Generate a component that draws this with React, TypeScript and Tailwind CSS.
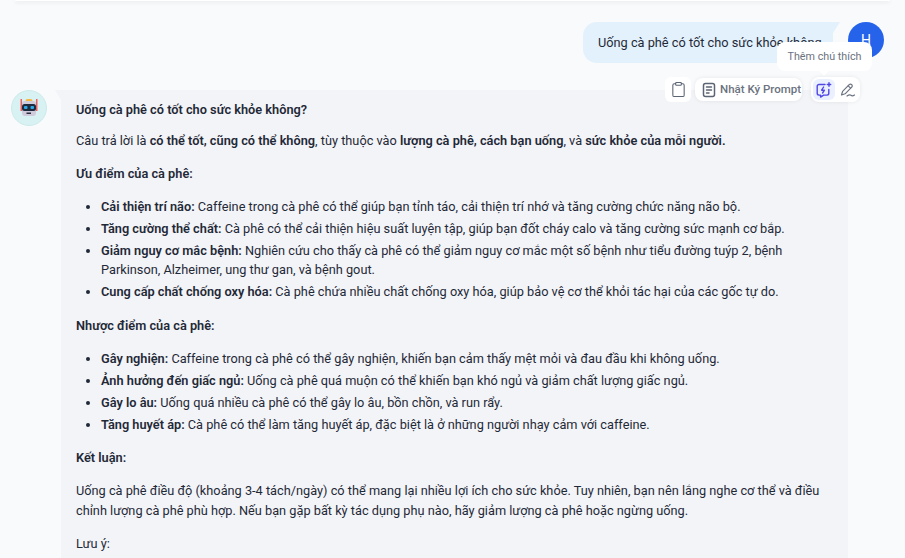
import { Clipboard } from 'lucide-react';

function BotAvatar() {
  return (
    <svg width="36" height="36" viewBox="0 0 36 36" className="shrink-0">
      <circle cx="18" cy="18" r="17.5" fill="#d8f1f2" stroke="#cdeaea" />
      <path d="M9.5 9h1.5l.5 12h-2zM25 9h1.5v12h-2z" fill="#e8605f" />
      <path d="M14.5 11q0-2 2-2h3q2 0 2 2z" fill="#f5b942" />
      <rect x="11" y="11" width="14" height="15" rx="3" fill="#cfcbdc" />
      <rect x="11" y="14" width="14" height="7" rx="2.5" fill="#1f2a3c" />
      <rect x="13" y="16" width="3.5" height="3" rx="1" fill="#2fa8e8" />
      <rect x="19.5" y="16" width="3.5" height="3" rx="1" fill="#2fa8e8" />
      <rect x="15.5" y="22.5" width="4.5" height="1.5" fill="#2b2f3d" />
    </svg>
  );
}

function PromptIcon() {
  return (
    <svg width="16" height="16" viewBox="0 0 16 16" fill="none" stroke="#5b6472" strokeWidth="1.5" strokeLinecap="round" strokeLinejoin="round">
      <rect x="2.5" y="1.5" width="11" height="13" rx="2" />
      <path d="M5.5 5h5M5.5 8h5M5.5 11h2.5" />
    </svg>
  );
}

function NoteIcon() {
  return (
    <svg width="16" height="16" viewBox="0 0 16 16" fill="none" stroke="#4f46e5" strokeWidth="1.4" strokeLinejoin="round" strokeLinecap="round">
      <path d="M9 2.5H3a1.8 1.8 0 0 0-1.8 1.8v7a1.8 1.8 0 0 0 1.8 1.8h1.6v2l3-2H11a1.8 1.8 0 0 0 1.8-1.8V7.5" />
      <path d="M7.6 5 5.6 8.2h2.8L6.6 11" />
      <path d="M13 .8v3.4M11.3 2.5h3.4" />
    </svg>
  );
}

function EditIcon() {
  return (
    <svg width="16" height="16" viewBox="0 0 16 16" fill="none" stroke="#6b7280" strokeWidth="1.2" strokeLinejoin="round" strokeLinecap="round">
      <path d="M1.5 13 2.6 9.3 9.2 2.7a1.7 1.7 0 0 1 2.5 2.5L5.1 11.8z" />
      <path d="M8.2 3.8 10.6 6.2" />
      <path d="M7 14c2-1.5 3-1.5 4-.7s2 .7 3.5-.3" />
    </svg>
  );
}

function Item({ title, children }: { title: string; children: string }) {
  return (
    <li className="mt-[2.5px] first:mt-0">
      <b className="font-semibold">{title}</b> {children}
    </li>
  );
}

export default function App() {
  return (
    <div className="h-[558px] w-[905px] overflow-hidden bg-[#f9fafc] font-['Roboto',sans-serif] text-[12.75px] leading-[19.5px] text-[#1f2937]">
      {/* Top bar edge */}
      <div className="mx-[15px] h-[1px] rounded-b-lg bg-white shadow-[0_1px_4px_rgba(0,0,0,0.18)]" />

      {/* User message */}
      <div className="mt-[21px] flex justify-end pr-[21px]">
        <div className="flex h-[41px] w-[250px] items-center whitespace-nowrap rounded-[14px] rounded-tr-none bg-[#e3f1fc] pl-[15px]">
          Uống cà phê có tốt cho sức khỏe không
        </div>
        <div className="h-[11px] w-[7px] bg-[#e3f1fc] [clip-path:polygon(0_0,100%_0,0_100%)]" />
        <div className="ml-2 flex h-9 w-9 items-center justify-center rounded-full bg-[#2563eb] text-sm text-white">H</div>
      </div>

      {/* Assistant message */}
      <div className="relative mt-[27px] flex pl-[11px]">
        <BotAvatar />
        <div className="ml-2 h-[10px] w-[6px] bg-[#f3f4f8] [clip-path:polygon(0_0,100%_0,100%_100%)]" />
        <div className="h-[480px] w-[787px] bg-[#f3f4f8] pb-[9px] pl-[15px] pr-[20px] pt-[10px]">
          <p className="font-semibold">Uống cà phê có tốt cho sức khỏe không?</p>
          <p className="mt-[11px]">
            Câu trả lời là <b className="font-semibold">có thể tốt, cũng có thể không</b>, tùy thuộc vào{' '}
            <b className="font-semibold">lượng cà phê, cách bạn uống</b>, và <b className="font-semibold">sức khỏe của mỗi người.</b>
          </p>
          <p className="mt-[13.5px] font-semibold">Ưu điểm của cà phê:</p>
          <ul className="mt-[13.5px] list-disc pl-[25px]">
            <Item title="Cải thiện trí não:">Caffeine trong cà phê có thể giúp bạn tỉnh táo, cải thiện trí nhớ và tăng cường chức năng não bộ.</Item>
            <Item title="Tăng cường thể chất:">Cà phê có thể cải thiện hiệu suất luyện tập, giúp bạn đốt cháy calo và tăng cường sức mạnh cơ bắp.</Item>
            <Item title="Giảm nguy cơ mắc bệnh:">Nghiên cứu cho thấy cà phê có thể giảm nguy cơ mắc một số bệnh như tiểu đường tuýp 2, bệnh Parkinson, Alzheimer, ung thư gan, và bệnh gout.</Item>
            <Item title="Cung cấp chất chống oxy hóa:">Cà phê chứa nhiều chất chống oxy hóa, giúp bảo vệ cơ thể khỏi tác hại của các gốc tự do.</Item>
          </ul>
          <p className="mt-[14.5px] font-semibold">Nhược điểm của cà phê:</p>
          <ul className="mt-[13.5px] list-disc pl-[25px]">
            <Item title="Gây nghiện:">Caffeine trong cà phê có thể gây nghiện, khiến bạn cảm thấy mệt mỏi và đau đầu khi không uống.</Item>
            <Item title="Ảnh hưởng đến giấc ngủ:">Uống cà phê quá muộn có thể khiến bạn khó ngủ và giảm chất lượng giấc ngủ.</Item>
            <Item title="Gây lo âu:">Uống quá nhiều cà phê có thể gây lo âu, bồn chồn, và run rẩy.</Item>
            <Item title="Tăng huyết áp:">Cà phê có thể làm tăng huyết áp, đặc biệt là ở những người nhạy cảm với caffeine.</Item>
          </ul>
          <p className="mt-[13.5px] font-semibold">Kết luận:</p>
          <p className="mt-[13.5px]">
            Uống cà phê điều độ (khoảng 3-4 tách/ngày) có thể mang lại nhiều lợi ích cho sức khỏe. Tuy nhiên, bạn nên lắng nghe cơ thể và điều chỉnh lượng cà phê phù hợp. Nếu bạn gặp bất kỳ tác dụng phụ nào, hãy giảm lượng cà phê hoặc ngừng uống.
          </p>
          <p className="mt-[13.5px]">Lưu ý:</p>
        </div>

        {/* Floating message actions */}
        <div className="absolute right-[45px] top-[-13px] flex items-center text-[#6b7280]">
          <div className="flex h-[25px] w-[26px] items-center justify-center rounded-md bg-white">
            <Clipboard size={17} strokeWidth={1.5} color="#5b6472" />
          </div>
          <div className="ml-1 flex h-[23px] w-[107px] items-center gap-[3px] whitespace-nowrap rounded-lg bg-white pl-[6px] text-[11.5px] font-medium shadow-[0_0_4px_rgba(0,0,0,0.08)]">
            <PromptIcon />
            Nhật Ký Prompt
          </div>
          <div className="ml-[9px] flex h-[25px] w-[49px] items-center gap-[2px] rounded-lg bg-white pl-[2px] shadow-[0_0_4px_rgba(0,0,0,0.08)]">
            <div className="flex h-[21px] w-[22px] items-center justify-center rounded-md bg-[#eaf0fd]">
              <NoteIcon />
            </div>
            <div className="flex h-[21px] w-[22px] items-center justify-center">
              <EditIcon />
            </div>
          </div>
        </div>

        {/* Tooltip */}
        <div className="absolute left-[777px] top-[-48px] flex h-[29px] w-[95px] items-center justify-center whitespace-nowrap rounded-lg bg-white text-[10.75px] text-[#6b7280]">
          Thêm chú thích
          <div className="absolute bottom-[-3px] left-[43px] h-2 w-2 rotate-45 bg-white" />
        </div>
      </div>
    </div>
  );
}
